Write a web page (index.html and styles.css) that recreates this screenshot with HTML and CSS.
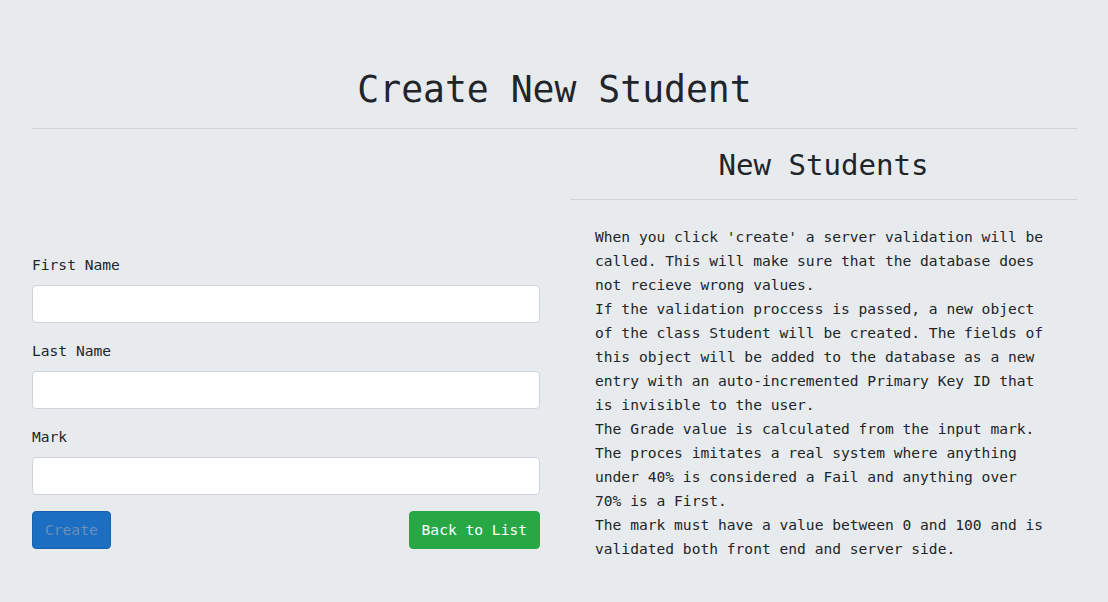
FILE: index.html
```html
<!DOCTYPE html>
<html lang="en">
<head>
<meta charset="utf-8">
<title>Create New Student</title>
<link rel="stylesheet" href="styles.css">
</head>
<body>
<main class="page">
  <h1 class="title">Create New Student</h1>
  <hr class="rule">
  <div class="cols">
    <section class="form-col">
      <form class="form">
        <div class="group">
          <label class="label" for="fn">First Name</label>
          <input class="input" id="fn" type="text">
        </div>
        <div class="group">
          <label class="label" for="ln">Last Name</label>
          <input class="input" id="ln" type="text">
        </div>
        <div class="group">
          <label class="label" for="mk">Mark</label>
          <input class="input" id="mk" type="text">
        </div>
        <div class="actions">
          <button type="button" class="btn btn-primary">Create</button>
          <button type="button" class="btn btn-success">Back to List</button>
        </div>
      </form>
    </section>
    <section class="info-col">
      <h2 class="subtitle">New Students</h2>
      <hr class="rule rule-sub">
      <p class="info">When you click 'create' a server validation will be called. This will make sure that the database does not recieve wrong values.<br>If the validation proccess is passed, a new object of the class Student will be created. The fields of this object will be added to the database as a new entry with an auto-incremented Primary Key ID that is invisible to the user.<br>The Grade value is calculated from the input mark. The proces imitates a real system where anything under 40% is considered a Fail and anything over 70% is a First.<br>The mark must have a value between 0 and 100 and is validated both front end and server side.</p>
    </section>
  </div>
</main>
</body>
</html>
```

FILE: styles.css
```css
* { box-sizing: border-box; }
html, body {
  margin: 0;
  padding: 0;
  background: #e8ebee;
}
body {
  font-family: "DejaVu Sans Mono", "Liberation Mono", monospace;
  font-size: 14.6px;
  line-height: 24px;
  color: #212529;
}
.page {
  padding: 66px 31px 0 32px;
}
.title {
  margin: 0;
  font-size: 36.4px;
  font-weight: 400;
  line-height: 48px;
  text-align: center;
}
.rule {
  margin: 14px 0 0;
  border: 0;
  border-top: 1px solid #cfd3d7;
  height: 0;
}
.cols {
  display: grid;
  grid-template-columns: 508px 1fr;
  column-gap: 30px;
}
.form {
  padding-top: 124px;
}
.group {
  margin-bottom: 16px;
}
.label {
  display: block;
  margin-bottom: 8px;
  line-height: 24px;
}
.input {
  display: block;
  width: 100%;
  height: 38px;
  background: #fff;
  border: 1px solid #ced4da;
  border-radius: 4px;
  font: inherit;
  padding: 6px 12px;
}
.actions {
  display: flex;
  justify-content: space-between;
}
.btn {
  font: inherit;
  line-height: 24px;
  padding: 6px 12px;
  border-radius: 4px;
  border: 1px solid transparent;
  cursor: pointer;
}
.btn-primary {
  background: #1b6ec2;
  border-color: #1861ac;
  color: #6d8fb8;
}
.btn-success {
  background: #28a745;
  border-color: #28a745;
  color: #fff;
}
.subtitle {
  margin: 0;
  padding-top: 17px;
  font-size: 29.1px;
  font-weight: 400;
  line-height: 38px;
  text-align: center;
}
.rule-sub {
  margin-top: 15px;
}
.info {
  margin: 25px 0 0;
  padding: 0 29px 0 25px;
}
```
